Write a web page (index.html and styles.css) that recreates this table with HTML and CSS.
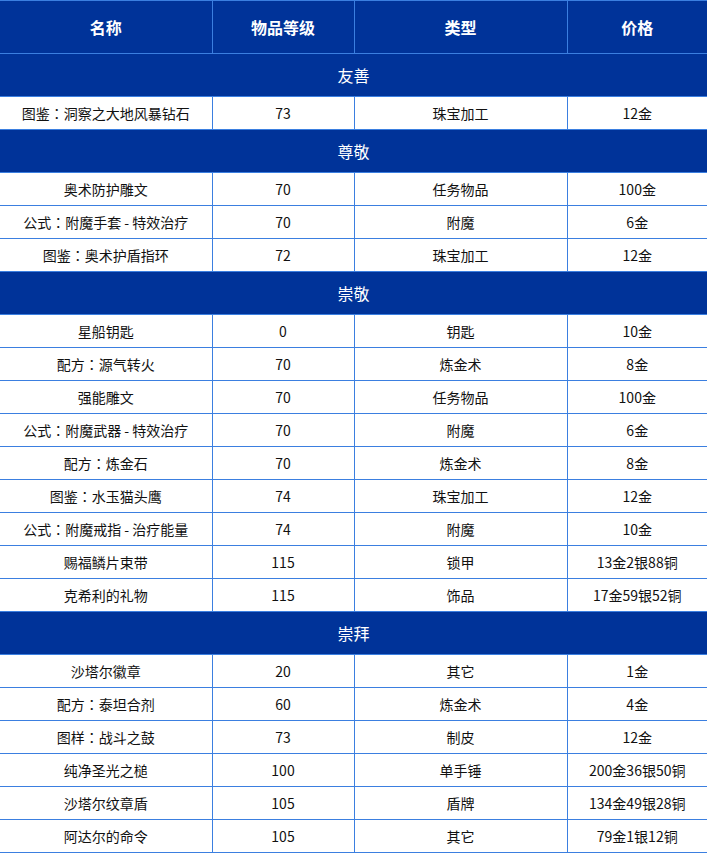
FILE: index.html
```html
<!DOCTYPE html>
<html lang="zh-CN">
<head>
<meta charset="utf-8">
<title>声望物品</title>
<link rel="stylesheet" href="styles.css">
</head>
<body>
<table class="rep-table">
  <colgroup>
    <col class="c1"><col class="c2"><col class="c3"><col class="c4">
  </colgroup>
  <thead>
    <tr class="head"><th>名称</th><th>物品等级</th><th>类型</th><th>价格</th></tr>
  </thead>
  <tbody>
    <tr class="group"><td colspan="4">友善</td></tr>
    <tr class="item"><td>图鉴<span class="colon" lang="ja">：</span>洞察之大地风暴钻石</td><td>73</td><td>珠宝加工</td><td>12金</td></tr>
    <tr class="group"><td colspan="4">尊敬</td></tr>
    <tr class="item"><td>奥术防护雕文</td><td>70</td><td>任务物品</td><td>100金</td></tr>
    <tr class="item"><td>公式<span class="colon" lang="ja">：</span>附魔手套 - 特效治疗</td><td>70</td><td>附魔</td><td>6金</td></tr>
    <tr class="item"><td>图鉴<span class="colon" lang="ja">：</span>奥术护盾指环</td><td>72</td><td>珠宝加工</td><td>12金</td></tr>
    <tr class="group"><td colspan="4">崇敬</td></tr>
    <tr class="item"><td>星船钥匙</td><td>0</td><td>钥匙</td><td>10金</td></tr>
    <tr class="item"><td>配方<span class="colon" lang="ja">：</span>源气转火</td><td>70</td><td>炼金术</td><td>8金</td></tr>
    <tr class="item"><td>强能雕文</td><td>70</td><td>任务物品</td><td>100金</td></tr>
    <tr class="item"><td>公式<span class="colon" lang="ja">：</span>附魔武器 - 特效治疗</td><td>70</td><td>附魔</td><td>6金</td></tr>
    <tr class="item"><td>配方<span class="colon" lang="ja">：</span>炼金石</td><td>70</td><td>炼金术</td><td>8金</td></tr>
    <tr class="item"><td>图鉴<span class="colon" lang="ja">：</span>水玉猫头鹰</td><td>74</td><td>珠宝加工</td><td>12金</td></tr>
    <tr class="item"><td>公式<span class="colon" lang="ja">：</span>附魔戒指 - 治疗能量</td><td>74</td><td>附魔</td><td>10金</td></tr>
    <tr class="item"><td>赐福鳞片束带</td><td>115</td><td>锁甲</td><td>13金2银88铜</td></tr>
    <tr class="item"><td>克希利的礼物</td><td>115</td><td>饰品</td><td>17金59银52铜</td></tr>
    <tr class="group"><td colspan="4">崇拜</td></tr>
    <tr class="item"><td>沙塔尔徽章</td><td>20</td><td>其它</td><td>1金</td></tr>
    <tr class="item"><td>配方<span class="colon" lang="ja">：</span>泰坦合剂</td><td>60</td><td>炼金术</td><td>4金</td></tr>
    <tr class="item"><td>图样<span class="colon" lang="ja">：</span>战斗之鼓</td><td>73</td><td>制皮</td><td>12金</td></tr>
    <tr class="item"><td>纯净圣光之槌</td><td>100</td><td>单手锤</td><td>200金36银50铜</td></tr>
    <tr class="item"><td>沙塔尔纹章盾</td><td>105</td><td>盾牌</td><td>134金49银28铜</td></tr>
    <tr class="item"><td>阿达尔的命令</td><td>105</td><td>其它</td><td>79金1银12铜</td></tr>
  </tbody>
</table>
</body>
</html>
```

FILE: styles.css
```css
html, body {
  margin: 0;
  padding: 0;
  background: #ffffff;
}

body {
  font-family: "Noto Sans CJK SC", "Noto Sans", "Liberation Sans", sans-serif;
  color: #111111;
}

.rep-table {
  width: 707px;
  border-collapse: collapse;
  table-layout: fixed;
}

.c1 { width: 212px; }
.c2 { width: 142px; }
.c3 { width: 213px; }
.c4 { width: 140px; }

.rep-table th,
.rep-table td {
  border: 1px solid #3b7fe0;
  padding: 0;
  text-align: center;
  vertical-align: middle;
  line-height: 1;
}

.rep-table tr > :first-child { border-left: none; }
.rep-table tr > :last-child { border-right: none; }

.colon {
  font-family: "Noto Sans CJK JP", "Noto Sans CJK SC", sans-serif;
}

.head th {
  height: 51px;
  padding-bottom: 1px;
  background: #003399;
  color: #ffffff;
  font-size: 16px;
  font-weight: bold;
}

.group td {
  height: 41px;
  padding-bottom: 1px;
  background: #003399;
  color: #ffffff;
  font-size: 16px;
}

.item td {
  height: 31px;
  padding-bottom: 1px;
  font-size: 14px;
  color: #111111;
}
```
